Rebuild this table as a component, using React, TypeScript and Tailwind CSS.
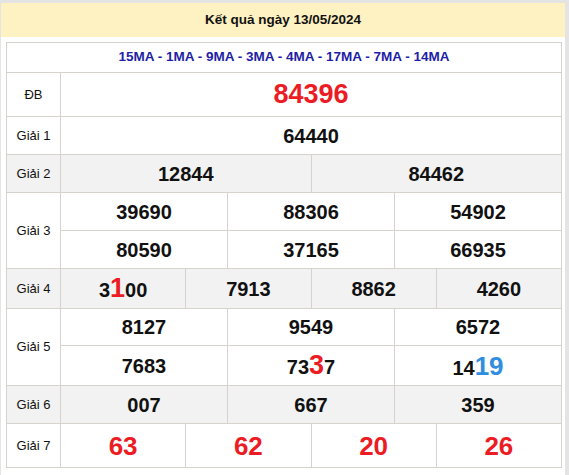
import React from 'react';

type Part = { text: string; color?: 'red' | 'blue' };
type Line = { h: string; cells: Part[][] };
type Prize = { label: string; gray?: boolean; lines: Line[] };

const n = (s: string): Part[] => [{ text: s }];

const prizes: Prize[] = [
  { label: 'Giải 1', lines: [{ h: 'h-[37px]', cells: [n('64440')] }] },
  { label: 'Giải 2', gray: true, lines: [{ h: 'h-[37px]', cells: [n('12844'), n('84462')] }] },
  {
    label: 'Giải 3',
    lines: [
      { h: 'h-[37px]', cells: [n('39690'), n('88306'), n('54902')] },
      { h: 'h-[38px]', cells: [n('80590'), n('37165'), n('66935')] },
    ],
  },
  {
    label: 'Giải 4',
    gray: true,
    lines: [
      {
        h: 'h-[39px]',
        cells: [
          [{ text: '3' }, { text: '1', color: 'red' }, { text: '00' }],
          n('7913'),
          n('8862'),
          n('4260'),
        ],
      },
    ],
  },
  {
    label: 'Giải 5',
    lines: [
      { h: 'h-[36px]', cells: [n('8127'), n('9549'), n('6572')] },
      {
        h: 'h-[40px]',
        cells: [
          n('7683'),
          [{ text: '73' }, { text: '3', color: 'red' }, { text: '7' }],
          [{ text: '14' }, { text: '19', color: 'blue' }],
        ],
      },
    ],
  },
  { label: 'Giải 6', gray: true, lines: [{ h: 'h-[37px]', cells: [n('007'), n('667'), n('359')] }] },
];

function Num({ parts }: { parts: Part[] }) {
  return (
    <span className="text-[20px] font-bold text-[#111] leading-none">
      {parts.map((p, i) =>
        p.color === 'red' ? (
          <span key={i} className="text-[27px] text-[#ec1c24]">{p.text}</span>
        ) : p.color === 'blue' ? (
          <span key={i} className="text-[26px] text-[#2f8ee0]">{p.text}</span>
        ) : (
          <span key={i}>{p.text}</span>
        ),
      )}
    </span>
  );
}

function Row({ prize }: { prize: Prize }) {
  return (
    <div className={`flex border-b border-[#d6d2cc] ${prize.gray ? 'bg-[#f2f2f2]' : 'bg-white'}`}>
      <div className="w-[54px] shrink-0 border-r border-[#d6d2cc] flex items-center justify-center text-[13px] text-[#111]">
        {prize.label}
      </div>
      <div className="flex-1 flex flex-col">
        {prize.lines.map((line, li) => (
          <div
            key={li}
            className={`flex ${line.h} ${li > 0 ? 'border-t border-[#d6d2cc]' : ''}`}
          >
            {line.cells.map((c, ci) => (
              <div
                key={ci}
                className={`flex-1 basis-0 flex items-center justify-center ${ci > 0 ? 'border-l border-[#d6d2cc]' : ''}`}
              >
                <Num parts={c} />
              </div>
            ))}
          </div>
        ))}
      </div>
    </div>
  );
}

export default function App() {
  return (
    <div
      className="w-[569px] h-[475px] bg-white border-t-[3px] border-r-[4px] border-l border-[#e4e4e4] overflow-hidden"
      style={{ fontFamily: '"Liberation Sans", Arial, sans-serif' }}
    >
      <div className="h-[34px] bg-[#fff2c2] flex items-center justify-center text-[13.5px] font-bold text-[#111]">
        Kết quả ngày 13/05/2024
      </div>

      <div className="pl-[5px] pr-[3px] pt-[5px]">
        <div className="border border-[#d6d2cc]">
          <div className="h-[30px] border-b border-[#d6d2cc] flex items-center justify-center text-[13.5px] font-bold text-[#1e1ea6]">
            15MA - 1MA - 9MA - 3MA - 4MA - 17MA - 7MA - 14MA
          </div>

          <div className="flex h-[44px] border-b border-[#d6d2cc]">
            <div className="w-[54px] shrink-0 border-r border-[#d6d2cc] flex items-center justify-center text-[13px] text-[#111]">
              ĐB
            </div>
            <div className="flex-1 flex items-center justify-center text-[27px] font-bold text-[#ec1c24] leading-none">
              84396
            </div>
          </div>

          {prizes.map((p) => (
            <Row key={p.label} prize={p} />
          ))}

          <div className="flex h-[43px]">
            <div className="w-[54px] shrink-0 border-r border-[#d6d2cc] flex items-center justify-center text-[13px] text-[#111]">
              Giải 7
            </div>
            <div className="flex-1 flex">
              {['63', '62', '20', '26'].map((v, i) => (
                <div
                  key={v}
                  className={`flex-1 basis-0 flex items-center justify-center text-[26px] font-bold text-[#ec1c24] leading-none ${i > 0 ? 'border-l border-[#d6d2cc]' : ''}`}
                >
                  {v}
                </div>
              ))}
            </div>
          </div>
        </div>
      </div>
    </div>
  );
}
